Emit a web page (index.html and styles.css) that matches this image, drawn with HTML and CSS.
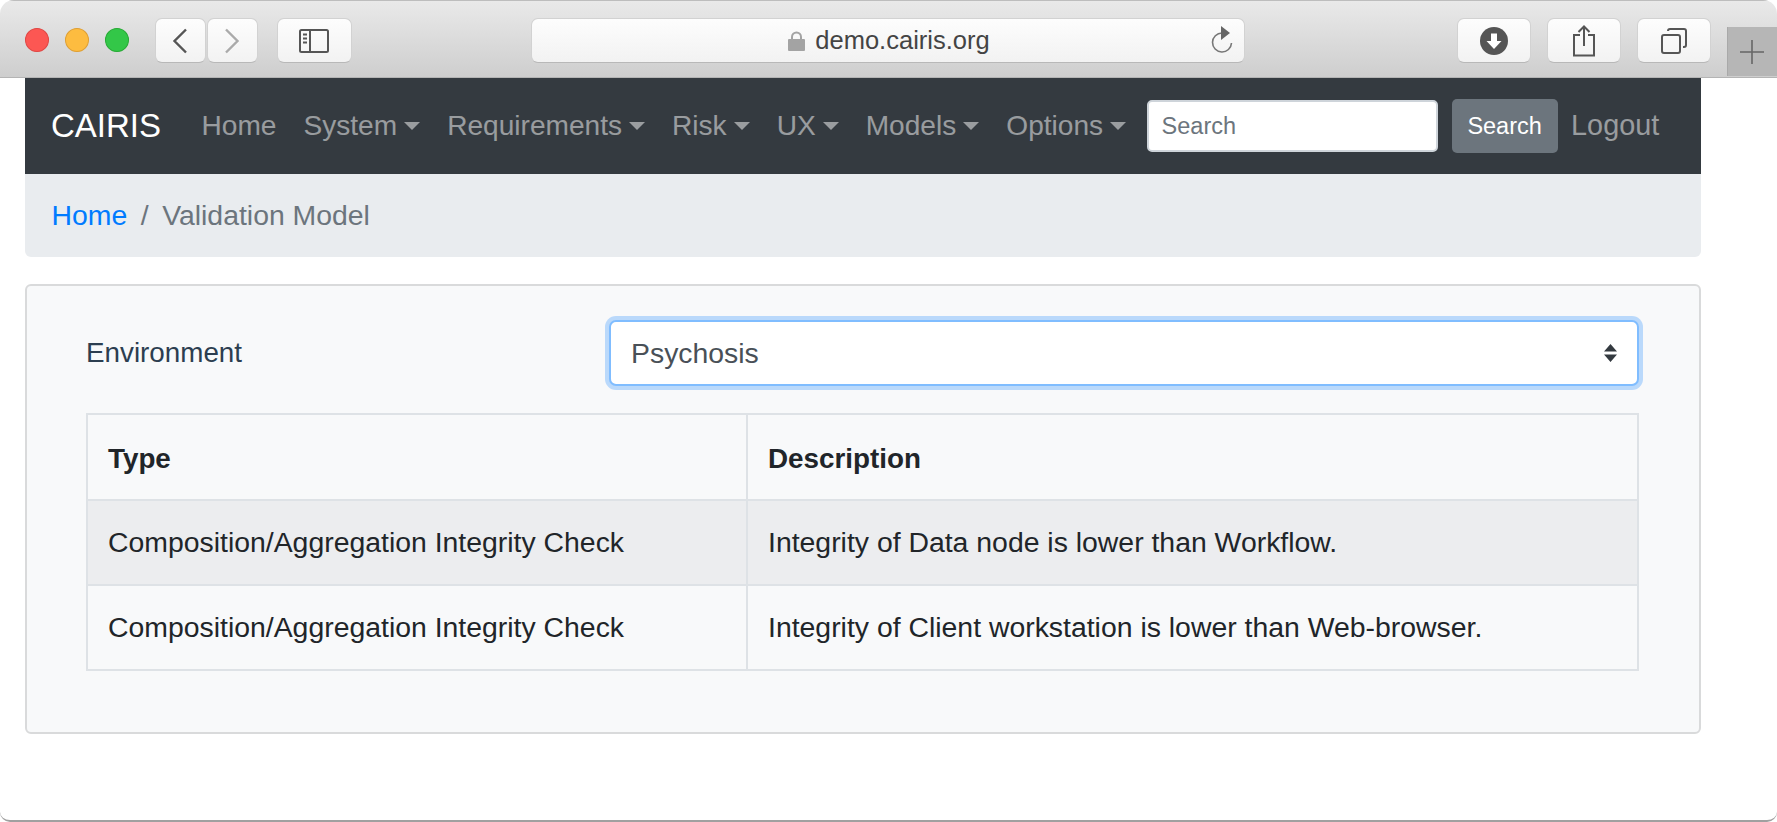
FILE: index.html
```html
<!DOCTYPE html>
<html lang="en">

<head>
    <meta charset="UTF-8" />
    <title>Validation Model | CAIRIS</title>
    <link rel="stylesheet" href="styles.css">
</head>

<body>
    <div class="window">
        <div class="toolbar">
            <span class="light light-red"></span>
            <span class="light light-yellow"></span>
            <span class="light light-green"></span>

            <button class="tool tool-nav tool-back" type="button" aria-label="Back">
                <svg width="16" height="26" viewBox="0 0 16 26">
                    <path d="M14 1.500 2.500 13 14 24.500" fill="none" stroke="#555" stroke-width="2.400" />
                </svg>
            </button>
            <button class="tool tool-nav tool-forward" type="button" aria-label="Forward">
                <svg width="16" height="26" viewBox="0 0 16 26">
                    <path d="M2 1.500 13.500 13 2 24.500" fill="none" stroke="#aaa" stroke-width="2.400" />
                </svg>
            </button>
            <button class="tool tool-sidebar" type="button" aria-label="Sidebar">
                <svg width="30" height="24" viewBox="0 0 30 24">
                    <rect x="1" y="1" width="28" height="22" rx="1.500" fill="none" stroke="#555" stroke-width="2" />
                    <path d="M11 1v22" stroke="#555" stroke-width="2" />
                    <path d="M4 5.500h4M4 9.500h4M4 13.500h4" stroke="#555" stroke-width="2" />
                </svg>
            </button>

            <div class="address">
                <svg class="lock" width="17" height="20" viewBox="0 0 17 20">
                    <path d="M4 9V6a4.500 4.500 0 0 1 9 0v3" fill="none" stroke="#a3a3a3" stroke-width="2" />
                    <rect y="8" width="17" height="12" rx="1" fill="#a3a3a3" />
                </svg>
                <span class="address-text">demo.cairis.org</span>
                <svg class="reload" width="24" height="28" viewBox="0 0 24 28">
                    <path d="M12 7a9.500 9.500 0 1 0 9.500 10" fill="none" stroke="#777" stroke-width="1.600" />
                    <path d="M11 0l9 7-9 7z" fill="#666" />
                </svg>
            </div>

            <button class="tool tool-download" type="button" aria-label="Downloads">
                <svg width="28" height="28" viewBox="0 0 28 28">
                    <circle cx="14" cy="14" r="14" fill="#555" />
                    <path d="M11 6.500h6v7.500h4.500L14 22l-7.500-8H11z" fill="#fff" />
                </svg>
            </button>
            <button class="tool tool-share" type="button" aria-label="Share">
                <svg width="24" height="32" viewBox="0 0 24 32">
                    <path d="M8 10H2v20.500h20V10h-6" fill="none" stroke="#555" stroke-width="2" />
                    <path d="M12 21V2M6.500 7 12 1.500 17.500 7" fill="none" stroke="#555" stroke-width="2" />
                </svg>
            </button>
            <button class="tool tool-tabs" type="button" aria-label="Tabs">
                <svg width="26" height="26" viewBox="0 0 26 26">
                    <rect x="1" y="7" width="18" height="18" rx="2" fill="none" stroke="#555" stroke-width="2" />
                    <path d="M7 3V3a2 2 0 0 1 2-2h14a2 2 0 0 1 2 2v14a2 2 0 0 1-2 2h-1" fill="none" stroke="#555" stroke-width="2" />
                </svg>
            </button>
            <div class="new-tab">
                <svg width="24" height="24" viewBox="0 0 24 24">
                    <path d="M12 0v24M0 12h24" stroke="#666" stroke-width="1.600" />
                </svg>
            </div>
        </div>

        <div class="page">
            <nav class="navbar">
                <a class="brand" href="#">CAIRIS</a>
                <a class="nav-link" href="#">Home</a>
                <a class="nav-link caret" href="#">System</a>
                <a class="nav-link caret" href="#">Requirements</a>
                <a class="nav-link caret" href="#">Risk</a>
                <a class="nav-link caret" href="#">UX</a>
                <a class="nav-link caret" href="#">Models</a>
                <a class="nav-link caret" href="#">Options</a>
                <form class="nav-search">
                    <input class="search-input" type="text" placeholder="Search" />
                    <button class="search-btn" type="button">Search</button>
                </form>
                <a class="nav-link nav-logout" href="#">Logout</a>
            </nav>

            <div class="breadcrumb">
                <a href="#">Home</a>
                <span class="divider">/</span>
                <span class="current">Validation Model</span>
            </div>

            <div class="card">
                <div class="form-row">
                    <label for="environment">Environment</label>
                    <div class="select-wrap">
                        <select id="environment">
                            <option>Psychosis</option>
                        </select>
                        <svg class="select-arrows" width="13" height="18" viewBox="0 0 13 18">
                            <path d="M6.500 0 13 7.500H0zM6.500 18 0 10.500h13z" fill="#343a40" />
                        </svg>
                    </div>
                </div>

                <table>
                    <thead>
                        <tr>
                            <th class="col-type">Type</th>
                            <th>Description</th>
                        </tr>
                    </thead>
                    <tbody>
                        <tr class="striped">
                            <td>Composition/Aggregation Integrity Check</td>
                            <td>Integrity of Data node is lower than Workflow.</td>
                        </tr>
                        <tr>
                            <td>Composition/Aggregation Integrity Check</td>
                            <td>Integrity of Client workstation is lower than Web-browser.</td>
                        </tr>
                    </tbody>
                </table>
            </div>
        </div>
    </div>
</body>

</html>
```

FILE: styles.css
```css
* {
    box-sizing: border-box;
}

html,
body {
    margin: 0;
    height: 100%;
    background: #fff;
    overflow: hidden;
}

body {
    font-family: "Liberation Sans", Arial, sans-serif;
    font-size: 28.400px;
    line-height: 1.5;
    color: #212529;
}

.window {
    height: 822px;
    background: #fff;
    border-radius: 14px 14px 10px 10px;
    border-bottom: 2px solid #a0a0a0;
    overflow: hidden;
}

.toolbar {
    display: flex;
    align-items: flex-start;
    height: 78px;
    padding: 18px 0 0 25px;
    background: linear-gradient(#e9e9e9, #cecece);
    border-top: 1px solid #bdbdbd;
    border-bottom: 1px solid #b4b4b4;
}

.light {
    width: 24px;
    height: 24px;
    margin: 9px 16px 0 0;
    border-radius: 50%;
}

.light-red {
    background: #fc5753;
    border: 1px solid #df4744;
}

.light-yellow {
    background: #fdbc40;
    border: 1px solid #de9f34;
}

.light-green {
    background: #33c748;
    border: 1px solid #27aa35;
}

.tool {
    display: flex;
    align-items: center;
    justify-content: center;
    width: 74px;
    height: 45px;
    margin-top: -1px;
    padding: 0;
    background: linear-gradient(#fdfdfd, #f2f2f2);
    border: 1px solid #d2d2d2;
    border-bottom-color: #b8b8b8;
    border-radius: 7px;
}

.tool-nav {
    width: 51px;
}

.tool-back {
    margin-left: 10px;
}

.tool-forward {
    margin-left: 1px;
}

.tool-sidebar {
    width: 75px;
    margin-left: 19px;
}

.address {
    display: flex;
    position: relative;
    align-items: center;
    justify-content: center;
    width: 715px;
    height: 45px;
    margin: -1px 0 0 179px;
    padding-left: 2px;
    background: linear-gradient(#fdfdfd, #f2f2f2);
    border: 1px solid #d2d2d2;
    border-bottom-color: #b8b8b8;
    border-radius: 7px;
}

.lock {
    margin: 0 10px 0 0;
}

.address-text {
    font-size: 25.500px;
    color: #444;
}

.reload {
    position: absolute;
    right: 10px;
    top: 7px;
}

.tool-download {
    margin-left: 212px;
}

.tool-share,
.tool-tabs {
    margin-left: 16px;
}

.new-tab {
    display: flex;
    align-items: center;
    justify-content: center;
    width: 50px;
    height: 49px;
    margin: 8px 0 0 16px;
    background: #b6b6b6;
    border-left: 1px solid #a9a9a9;
}

.page {
    width: 1701px;
    padding-left: 25px;
}

.navbar {
    display: flex;
    align-items: center;
    height: 96px;
    padding: 0 26px;
    background: #343a40;
}

.brand {
    margin-right: 27px;
    font-size: 33px;
    color: #fff;
    text-decoration: none;
}

.nav-link {
    padding: 0 13.500px;
    font-size: 28.100px;
    color: rgba(255, 255, 255, 0.5);
    text-decoration: none;
    white-space: nowrap;
}

.nav-logout {
    font-size: 28.800px;
}

.caret::after {
    content: "";
    display: inline-block;
    margin-left: 7px;
    vertical-align: 5px;
    border-top: 8px solid;
    border-left: 8px solid transparent;
    border-right: 8px solid transparent;
}

.nav-search {
    display: flex;
    align-items: center;
    margin-left: 7px;
}

.search-input {
    width: 291px;
    height: 52px;
    padding: 0 13px;
    font-family: inherit;
    font-size: 23.500px;
    color: #495057;
    background: #fff;
    border: 2px solid #ced4da;
    border-radius: 5px;
}

.search-input::placeholder {
    color: #6c757d;
}

.search-btn {
    width: 106px;
    height: 54px;
    margin-left: 14px;
    padding: 0;
    font-family: inherit;
    font-size: 23.500px;
    color: #fff;
    background: #6c757d;
    border: none;
    border-radius: 5px;
}

.breadcrumb {
    display: flex;
    align-items: center;
    height: 83px;
    margin-bottom: 27px;
    padding: 0 26.500px;
    background: #e9ecef;
    border-radius: 0 0 6px 6px;
}

.breadcrumb a {
    color: #007bff;
    text-decoration: none;
}

.divider {
    padding: 0 13.500px;
    color: #6c757d;
}

.current {
    color: #6c757d;
}

.card {
    height: 450px;
    padding: 34px 60px 0 59px;
    background: #f8f9fa;
    border: 2px solid #d9dadb;
    border-radius: 6px;
}

.form-row {
    display: flex;
    justify-content: space-between;
    align-items: center;
    margin-bottom: 27px;
}

label {
    font-size: 27.800px;
    color: #2c3e50;
}

.select-wrap {
    position: relative;
    width: 1030px;
}

select {
    display: block;
    width: 100%;
    height: 66px;
    padding: 0 20px;
    font-family: inherit;
    font-size: 28.400px;
    color: #495057;
    background: #fff;
    border: 2px solid #80bdff;
    border-radius: 7px;
    box-shadow: 0 0 0 4px rgba(0, 123, 255, 0.25);
    appearance: none;
    outline: none;
}

.select-arrows {
    position: absolute;
    right: 22px;
    top: 24px;
    pointer-events: none;
}

table {
    width: 100%;
    table-layout: fixed;
    border-collapse: collapse;
}

th,
td {
    height: 85px;
    padding: 0 20px;
    text-align: left;
    border: 2px solid #dee2e6;
}

th {
    height: 86px;
    padding-top: 3px;
    font-size: 27.800px;
    font-weight: bold;
}

.col-type {
    width: 660px;
}

.striped td {
    background: #ecedef;
}
```
